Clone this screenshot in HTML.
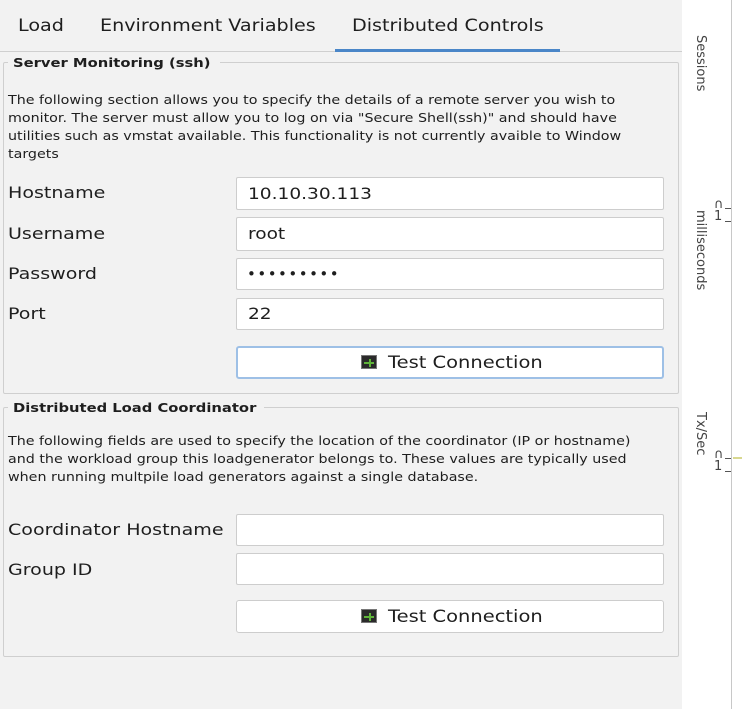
<!DOCTYPE html>
<html><head><meta charset="utf-8"><style>
*{box-sizing:border-box;margin:0;padding:0}
body{width:742px;height:709px;overflow:hidden;background:#f2f2f2;font-family:"DejaVu Sans","Liberation Sans",sans-serif;color:#1e1e1e;position:relative}
.a{position:absolute;white-space:nowrap}
.s{display:inline-block;transform-origin:left center}
.tab{font-size:16.5px;top:16px;transform:scaleX(1.16);transform-origin:left center}
.grp{position:absolute;border:1px solid #cfcfcf;border-radius:2px}
.gt{position:absolute;font-weight:bold;font-size:12.5px;background:#f2f2f2;padding:0 4px 0 5px;width:auto}
.gt span{display:inline-block;transform:scaleX(1.18);transform-origin:left center}
.desc{position:absolute;left:8px;font-size:12.4px;line-height:18px;white-space:nowrap;transform:scaleX(1.15);transform-origin:left top}
.lbl{position:absolute;left:8px;font-size:16px;transform:scaleX(1.19);transform-origin:left center;white-space:nowrap}
.f{position:absolute;left:236px;width:428px;background:#fff;border:1px solid #cdcdcd;border-radius:2px;font-size:16px;padding-left:11px;line-height:30px}
.f span{display:inline-block;transform:scaleX(1.16);transform-origin:left center}
.btn{position:absolute;left:236px;width:428px;height:33px;background:#fff;border:1px solid #cdcdcd;border-radius:3px;font-size:16.5px;line-height:31px;padding-left:124px;white-space:nowrap}
.btn span.t{display:inline-block;transform:scaleX(1.18);transform-origin:left center}
.btn.foc{border:2px solid #9ec0e6;line-height:29px;padding-left:123px}
.ic{display:inline-block;width:16px;height:14px;background:#2a2a2a;border:1px solid #777;vertical-align:-1px;margin-right:11px;position:relative}
.ic:after{content:"";position:absolute;left:2px;right:2px;top:6px;height:2px;background:#5fb43a}
.ic:before{content:"";position:absolute;left:7px;top:3px;width:2px;height:8px;background:#5fb43a}
.rot{position:absolute;transform:rotate(90deg);transform-origin:left top;font-size:13px;color:#444;white-space:nowrap}
</style></head><body>
<div class="a tab" style="left:18px">Load</div>
<div class="a tab" style="left:100px">Environment Variables</div>
<div class="a tab" style="left:352px">Distributed Controls</div>
<div class="a" style="left:0;top:51px;width:682px;height:1px;background:#cfcfcf"></div>
<div class="a" style="left:335px;top:49px;width:225px;height:3px;background:#4a86c8"></div>

<div class="grp" style="left:3px;top:62px;width:676px;height:332px"></div>
<div class="gt" style="left:8px;top:55px;width:212px"><span>Server Monitoring (ssh)</span></div>
<div class="desc" style="top:91px">The following section allows you to specify the details of a remote server you wish to<br>monitor. The server must allow you to log on via "Secure Shell(ssh)" and should have<br>utilities such as vmstat available. This functionality is not currently avaible to Window<br>targets</div>
<div class="lbl" style="top:183px">Hostname</div>
<div class="f" style="top:177px;height:33px;line-height:31px"><span>10.10.30.113</span></div>
<div class="lbl" style="top:224px">Username</div>
<div class="f" style="top:217px;height:34px;line-height:32px"><span>root</span></div>
<div class="lbl" style="top:264px">Password</div>
<div class="f" style="top:258px;height:32px;font-size:15px;letter-spacing:1.5px;padding-left:10px">•••••••••</div>
<div class="lbl" style="top:304px">Port</div>
<div class="f" style="top:298px;height:32px"><span>22</span></div>
<div class="btn foc" style="top:346px"><span class="ic"></span><span class="t">Test Connection</span></div>

<div class="grp" style="left:3px;top:407px;width:676px;height:250px"></div>
<div class="gt" style="left:8px;top:400px;width:256px"><span>Distributed Load Coordinator</span></div>
<div class="desc" style="top:432px">The following fields are used to specify the location of the coordinator (IP or hostname)<br>and the workload group this loadgenerator belongs to. These values are typically used<br>when running multpile load generators against a single database.</div>
<div class="lbl" style="top:520px">Coordinator Hostname</div>
<div class="f" style="top:514px;height:32px"></div>
<div class="lbl" style="top:560px">Group ID</div>
<div class="f" style="top:553px;height:32px"></div>
<div class="btn" style="top:600px"><span class="ic"></span><span class="t">Test Connection</span></div>

<div class="a" style="left:682px;top:0;width:60px;height:709px;background:#fff"></div>
<div class="a" style="left:731px;top:0;width:1px;height:709px;background:#c8c8c8"></div>
<div class="rot" style="left:708px;top:35px">Sessions</div>
<div class="rot" style="left:708px;top:210px">milliseconds</div>
<div class="rot" style="left:708px;top:412px">Tx/Sec</div>
<div class="a" style="left:714px;top:199px;font-size:13px;color:#444;line-height:12px">∩<br>1</div>
<div class="a" style="left:714px;top:449px;font-size:13px;color:#444;line-height:12px">∩<br>1</div>
<div class="a" style="left:725px;top:208px;width:6px;height:1px;background:#555"></div>
<div class="a" style="left:725px;top:221px;width:6px;height:1px;background:#555"></div>
<div class="a" style="left:725px;top:458px;width:6px;height:1px;background:#555"></div>
<div class="a" style="left:725px;top:471px;width:6px;height:1px;background:#555"></div>
<div class="a" style="left:733px;top:457px;width:9px;height:2px;background:#d8d890"></div>
</body></html>
